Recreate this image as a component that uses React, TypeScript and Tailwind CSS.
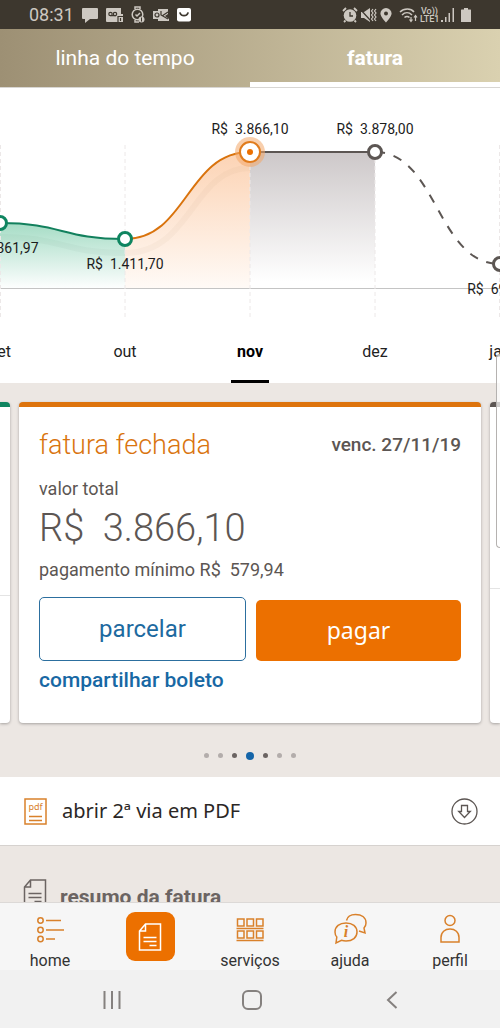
import React from 'react';

const months = ['set', 'out', 'nov', 'dez', 'jan'];

const points = [
    { x: 0, y: 135, color: '#0f8560' },
    { x: 125, y: 151, color: '#0f8560' },
    { x: 375, y: 64, color: '#5c5653' },
    { x: 500, y: 176, color: '#5c5653' },
];

const labels = [
    { x: 0, y: 165, text: 'R$  1.361,97' },
    { x: 125, y: 181, text: 'R$  1.411,70' },
    { x: 250, y: 46, text: 'R$  3.866,10' },
    { x: 375, y: 46, text: 'R$  3.878,00' },
    { x: 500, y: 206, text: 'R$  699,41' },
];

const dots = ['light', 'light', 'dark', 'active', 'dark', 'light', 'light'];

function StatusBar() {
    return (
        <div className="flex h-[29px] shrink-0 items-center bg-[#3d372e] pl-[29px] pr-[29px] text-[#cdc8c1]">
            <span className="text-[18px] leading-[29px]">08:31</span>
            <div className="ml-2 flex items-center gap-2">
                <svg width="16" height="16" viewBox="0 0 16 16" fill="currentColor">
                    <path d="M1 1h14a1 1 0 0 1 1 1v9a1 1 0 0 1-1 1H8l-5 4v-4H1a1 1 0 0 1-1-1V2a1 1 0 0 1 1-1z" />
                </svg>
                <svg width="17" height="16" viewBox="0 0 17 16">
                    <path d="M1 1h14v6h2v8H1a1 1 0 0 1-1-1V2a1 1 0 0 1 1-1z" fill="currentColor" />
                    <g fill="none" stroke="#3d372e" strokeWidth="1.2">
                        <circle cx="4.5" cy="7" r="1.7" />
                        <circle cx="9" cy="7" r="1.7" />
                        <path d="M4.5 8.7H10M12 15V9.500h5M14.500 11v3" />
                    </g>
                </svg>
                <svg width="14" height="17" viewBox="0 0 14 17" fill="none" stroke="currentColor" strokeWidth="1.500">
                    <path d="M4 3V1h5v2M4 14v2h4" />
                    <circle cx="6.500" cy="8.500" r="5.300" />
                    <path d="M4.500 8.500l1.500 1.500 3-3" />
                    <circle cx="10.500" cy="13.500" r="3" fill="currentColor" stroke="none" />
                    <path d="M10.500 11.500v4" stroke="#3d372e" strokeWidth="1" />
                </svg>
                <svg width="16" height="16" viewBox="0 0 16 16">
                    <path d="M0 4h5V2h10v5l-3 2 4 3v2H5v-2H0z" fill="currentColor" />
                    <g fill="none" stroke="#3d372e" strokeWidth="1.200">
                        <circle cx="4" cy="8" r="2" />
                        <path d="M8 4v4l7 4M9 9l6-4" />
                    </g>
                </svg>
                <svg width="15" height="15" viewBox="0 0 15 15">
                    <rect x="0" y="1" width="14" height="13.500" rx="2" fill="#fff" />
                    <path d="M3 6c1.500 3.600 6.500 3.600 8 0" fill="none" stroke="#3d372e" strokeWidth="1.700" strokeLinecap="round" />
                </svg>
            </div>
            <div className="ml-auto flex items-center">
                <svg width="16" height="16" viewBox="0 0 16 16">
                    <circle cx="8" cy="8.500" r="6.300" fill="currentColor" />
                    <path d="M1 4l3-3M15 4l-3-3M3.500 13.500L2 15M12.500 13.500L14 15" stroke="currentColor" strokeWidth="1.800" />
                    <path d="M8 5v4h3" fill="none" stroke="#3d372e" strokeWidth="1.300" />
                </svg>
                <svg width="17" height="16" viewBox="0 0 17 16" className="ml-[2px]">
                    <path d="M1 5h3l6-4v14l-6-4H1z" fill="currentColor" />
                    <path d="M0 2l11 12" stroke="#3d372e" strokeWidth="1.200" />
                    <path d="M13 2l-1.500 2L13 6l-1.500 2 1.500 2-1.500 2 1.500 2M16 2l-1.500 2L16 6l-1.500 2 1.500 2-1.500 2 1.500 2" fill="none" stroke="currentColor" strokeWidth="1.200" />
                </svg>
                <svg width="12" height="16" viewBox="0 0 12 16" className="ml-[3px]">
                    <path d="M6 1a5.600 5.600 0 0 1 5.600 5.600C11.600 10 6 15.500 6 15.500S.4 10 .4 6.600A5.600 5.600 0 0 1 6 1z" fill="currentColor" />
                    <circle cx="6" cy="6.500" r="2" fill="#3d372e" />
                </svg>
                <svg width="19" height="16" viewBox="0 0 19 16" className="ml-[7px]" fill="none" stroke="currentColor" strokeWidth="1.500">
                    <path d="M1 5c4-4 11-4 14 0M3 8c3-3 7-3 10 0M5.500 10.500c1.500-1.500 3.500-1.500 5 0" />
                    <path d="M12 10v4M10.500 12.500L12 14.500l1.500-2M16.500 14V9M15 10.500l1.500-2 1.500 2" strokeWidth="1.200" />
                </svg>
                <div className="ml-[2px] w-[19px] text-center text-[9px] font-medium leading-[8px]">
                    Vo))
                    <br />
                    LTE1
                </div>
                <svg width="14" height="16" viewBox="0 0 14 16" className="ml-[2px]" fill="currentColor">
                    <path d="M0 13h2v2H0zM4 10h1.500v5H4zM7.500 6H9v9H7.500zM11.500 1H13v14h-1.500z" />
                </svg>
                <svg width="10" height="16" viewBox="0 0 10 16" className="ml-[6px]" fill="currentColor">
                    <path d="M3 1h4v1.500h2.500a.5.5 0 0 1 .5.5v12H0V3a.5.5 0 0 1 .5-.5H3z" />
                </svg>
            </div>
        </div>
    );
}

function Chart() {
    return (
        <svg viewBox="0 0 500 232" className="block w-full" role="img" aria-label="faturas por mês">
            <defs>
                <linearGradient id="green" x1="0" y1="135" x2="0" y2="200" gradientUnits="userSpaceOnUse">
                    <stop offset="0" stopColor="#a5dcc5" />
                    <stop offset="1" stopColor="#fdfefe" />
                </linearGradient>
                <linearGradient id="orange" x1="0" y1="64" x2="0" y2="200" gradientUnits="userSpaceOnUse">
                    <stop offset="0" stopColor="#fcd3b4" />
                    <stop offset="1" stopColor="#fffaf6" />
                </linearGradient>
                <linearGradient id="gray" x1="0" y1="64" x2="0" y2="194" gradientUnits="userSpaceOnUse">
                    <stop offset="0" stopColor="#cdc8c9" />
                    <stop offset="1" stopColor="#ffffff" />
                </linearGradient>
            </defs>
            <path d="M0 135C62 135 62 151 125 151V200H0z" fill="url(#green)" />
            <path d="M125 151C187 151 187 64 250 64V200H125z" fill="url(#orange)" />
            <path d="M250 64H375V200H250z" fill="url(#gray)" />
            <path d="M125 165C192 165 192 80 250 80" fill="none" stroke="#b08060" strokeOpacity=".06" strokeWidth="6" />
            <path d="M0 149C62 149 62 165 125 165" fill="none" stroke="#307050" strokeOpacity=".04" strokeWidth="6" />
            <path d="M0 200.500H500" stroke="#c4c4c4" />
            <path d="M.5 57V229M125 57V229M250 57V229M375 57V229M499.500 57V229" stroke="#ece8e8" strokeDasharray="4 3" />
            <g fill="none" strokeWidth="2">
                <path d="M0 135C62 135 62 151 125 151" stroke="#12805d" />
                <path d="M125 151C187 151 187 64 250 64" stroke="#d9730d" />
                <path d="M250 64H375" stroke="#5c5653" />
                <path d="M375 64C437 64 437 176 500 176" stroke="#5c5653" strokeDasharray="9 9" strokeDashoffset="-1" />
            </g>
            {points.map((p) => (
                <circle key={p.x} cx={p.x} cy={p.y} r="6.500" fill="#fff" stroke={p.color} strokeWidth="3" />
            ))}
            <circle cx="250" cy="64" r="15" fill="#f2a869" fillOpacity=".55" />
            <circle cx="250" cy="64" r="10" fill="#fff" stroke="#e07b1c" strokeWidth="2" />
            <circle cx="250" cy="64" r="3" fill="#ec7000" />
            <g fontSize="14" textAnchor="middle" fill="#1c1c1c">
                {labels.map((l) => (
                    <text key={l.x} x={l.x} y={l.y} className="whitespace-pre">
                        {l.text}
                    </text>
                ))}
            </g>
        </svg>
    );
}

function DocIcon() {
    return (
        <svg width="24" height="28" viewBox="0 0 24 28" fill="none" stroke="currentColor" strokeWidth="1.500">
            <path d="M7.500 1H22.500V27H1.500V8zM7.500 1V8H1.500" />
            <path d="M5.500 14.500H18.500M5.500 18.500H18.500M11.500 22.500H18.500" />
        </svg>
    );
}

function InvoiceCard() {
    return (
        <div className="min-w-0 flex-1 rounded-[4px] border-t-[5px] border-[#dd730c] bg-white px-5 pb-[29px] pt-5 text-[#5c5653] shadow-[0_1px_3px_rgba(0,0,0,0.3)]">
            <div className="flex items-center justify-between">
                <h2 className="text-[27px] font-light leading-[36px] text-[#d9740f]">fatura fechada</h2>
                <span className="text-[19px] font-medium leading-[36px]">venc. 27/11/19</span>
            </div>
            <p className="mt-[14px] text-[18px] leading-6">valor total</p>
            <p className="whitespace-pre text-[38px] font-light leading-[54px]">{'R$  3.866,10'}</p>
            <p className="mt-[3px] whitespace-pre text-[18px] leading-6">{'pagamento mínimo R$  579,94'}</p>
            <div className="mt-[15px] flex items-end gap-[10px]">
                <button className="h-16 flex-1 rounded-[5px] border border-[#2c6f9f] text-[24px] text-[#1d6a9f]">parcelar</button>
                <button className="h-[61px] flex-1 rounded-[5px] bg-[#ec7000] font-['Noto_Sans',sans-serif] text-[23px] text-white">pagar</button>
            </div>
            <a href="#boleto" className="mt-[6px] block w-fit text-[21px] font-medium leading-[27px] text-[#1868a4]">
                compartilhar boleto
            </a>
        </div>
    );
}

function NavItem({ label, children }: { label: string; children: React.ReactNode }) {
    return (
        <button className="flex flex-col items-center text-[#d9812b]">
            <span className="flex h-[39px] items-start">{children}</span>
            <span className="text-[16px] leading-5 text-[#333]">{label}</span>
        </button>
    );
}

function BottomNav() {
    return (
        <nav className="grid h-[68px] shrink-0 grid-cols-5 border-t border-[#dcd9d7] bg-[#f6f6f6] pt-[9px]">
            <NavItem label="home">
                <svg width="27" height="34" viewBox="0 0 27 34" fill="none" stroke="currentColor" strokeWidth="1.500">
                    <circle cx="3.500" cy="8.500" r="2.700" />
                    <circle cx="3.500" cy="18" r="2.700" />
                    <circle cx="3.500" cy="27" r="2.700" />
                    <path d="M9 8.500h15M9 18h18M9 27h9" />
                </svg>
            </NavItem>
            <button aria-label="fatura" className="flex size-[49px] items-center justify-center self-start justify-self-center rounded-[9px] bg-[#ec7000] text-white">
                <DocIcon />
            </button>
            <NavItem label="serviços">
                <svg width="28" height="34" viewBox="0 0 28 34" fill="none" stroke="currentColor" strokeWidth="1.500">
                    <path d="M1.500 7h6.500v7H1.500zM11 7h6.500v7H11zM20.500 7h6.500v7h-6.500zM1.500 19h6.500v7H1.500zM11 19h6.500v7H11zM20.500 19h6.500v7h-6.500z" />
                    <path d="M.5 16.500h27M.5 28.500h27" />
                </svg>
            </NavItem>
            <NavItem label="ajuda">
                <svg width="34" height="34" viewBox="0 0 34 34" fill="none" stroke="currentColor" strokeWidth="1.500">
                    <path d="M13.500 8.500C14.500 4 18 2.500 22.500 2.500 28.500 2.500 33 5.500 33 11c0 2.500-1 4-2 5l1 5-6-2" />
                    <path d="M13 11c6.500 0 11 3.500 11 9s-4.500 9-11 9c-2 0-3-.2-4.500-.7L3 31l.8-6C2.300 23.500 2 22 2 20c0-5.500 4.500-9 11-9z" />
                    <text x="13" y="25" fontFamily="Liberation Serif, serif" fontSize="16" fontStyle="italic" fontWeight="bold" textAnchor="middle" fill="currentColor" stroke="none">
                        i
                    </text>
                </svg>
            </NavItem>
            <NavItem label="perfil">
                <svg width="20" height="34" viewBox="0 0 20 34" fill="none" stroke="currentColor" strokeWidth="1.500">
                    <circle cx="10" cy="8.500" r="5" />
                    <path d="M1 30v-4.500c0-5.500 4-8.500 9-8.500s9 3 9 8.500V30z" />
                </svg>
            </NavItem>
        </nav>
    );
}

export default function App() {
    return (
        <div className="relative flex h-screen flex-col overflow-hidden bg-[#ece7e3] font-[Roboto,sans-serif]">
            <StatusBar />
            <header className="grid h-[59px] shrink-0 grid-cols-2 border-b border-[#d8d6d3] bg-linear-to-r from-[#9d9074] to-[#dad1b0] text-[21px] text-white">
                <button className="border-b-[5px] border-transparent pt-[6px]">linha do tempo</button>
                <button className="border-b-[5px] border-white pt-[6px] font-bold">fatura</button>
            </header>

            <main className="min-h-0 flex-1 overflow-hidden">
                <section className="overflow-hidden bg-white">
                    <Chart />
                    <div className="-mx-[12.5%] grid h-[63px] grid-cols-5">
                        {months.map((m) => (
                            <button
                                key={m}
                                className={
                                    m === 'nov'
                                        ? 'justify-self-center border-b-[3px] border-black px-[6px] pt-[3px] text-[16px] font-bold'
                                        : 'justify-self-center border-b-[3px] border-transparent px-[6px] pt-[3px] text-[16px] text-[#222]'
                                }
                            >
                                {m}
                            </button>
                        ))}
                    </div>
                </section>

                <section className="pt-[19px]">
                    <div className="flex gap-[9px]">
                        <div className="w-[10px] shrink-0 rounded-r-[4px] border-t-[5px] border-[#0f8560] bg-white shadow-[0_1px_3px_rgba(0,0,0,0.3)]">
                            <div className="h-[189px] border-b border-[#e4e4e4]" />
                        </div>
                        <InvoiceCard />
                        <div className="w-[10px] shrink-0 rounded-l-[4px] border-t-[5px] border-[#5c5653] bg-white shadow-[0_1px_3px_rgba(0,0,0,0.3)]">
                            <div className="h-[182px] border-b border-[#e4e4e4]" />
                        </div>
                    </div>
                    <div className="flex h-[54px] items-center justify-center gap-[9px] pt-[11px]">
                        {dots.map((d, i) => (
                            <span
                                key={i}
                                className={
                                    d === 'active'
                                        ? 'size-2 rounded-full bg-[#1565a8]'
                                        : d === 'dark'
                                          ? 'size-[5px] rounded-full bg-[#6b6462]'
                                          : 'size-[5px] rounded-full bg-[#b3adab]'
                                }
                            />
                        ))}
                    </div>
                </section>

                <a href="#pdf" className="flex h-[69px] items-center border-b border-[#d6d2cf] bg-white pl-6 pr-[22px]">
                    <svg width="23" height="27" viewBox="0 0 23 27" fill="none" stroke="#d9812b" strokeWidth="1.500">
                        <rect x="1" y="1" width="21" height="25" />
                        <path d="M5 18.500h13M5 22.500h13" />
                        <text x="11.500" y="12" fontFamily="Noto Sans, sans-serif" fontSize="9" textAnchor="middle" fill="#d9812b" stroke="none">
                            pdf
                        </text>
                    </svg>
                    <span className="ml-[15px] font-['Noto_Sans',sans-serif] text-[20px] text-[#2b2725]">abrir 2ª via em PDF</span>
                    <svg width="27" height="27" viewBox="0 0 27 27" className="ml-auto" fill="none" stroke="#5c5653" strokeWidth="1.300">
                        <circle cx="13.500" cy="13.500" r="12.500" />
                        <path d="M10.500 7.500h6v6h2.800L13.500 19.500 7.700 13.500h2.800z" />
                    </svg>
                </a>

                <div className="flex items-start pl-[23px] pt-[33px] text-[#6b6462]">
                    <DocIcon />
                    <h3 className="ml-[13px] mt-[4px] text-[21px] font-bold leading-7">resumo da fatura</h3>
                </div>
            </main>

            <BottomNav />
            <div className="grid h-[58px] shrink-0 grid-cols-3 place-items-center bg-[#f1f1f1] pl-[42px] pr-[38px] pt-[2px] text-[#85817f]">
                <button aria-label="recentes">
                    <svg width="18" height="18" viewBox="0 0 18 18" stroke="currentColor" strokeWidth="2">
                        <path d="M1.500 0v18M9 0v18M16.500 0v18" />
                    </svg>
                </button>
                <button aria-label="início">
                    <svg width="20" height="20" viewBox="0 0 20 20" fill="none" stroke="currentColor" strokeWidth="2">
                        <rect x="1" y="1" width="18" height="18" rx="5" />
                    </svg>
                </button>
                <button aria-label="voltar">
                    <svg width="12" height="18" viewBox="0 0 12 18" fill="none" stroke="currentColor" strokeWidth="2">
                        <path d="M10.500 1L2 9l8.500 8" />
                    </svg>
                </button>
            </div>

            {/* edge panel handle */}
            <div className="absolute right-0 top-[354px] h-[194px] w-1 rounded-l-[4px] border border-r-0 border-[#b5b2b0] bg-white/70" />
        </div>
    );
}
